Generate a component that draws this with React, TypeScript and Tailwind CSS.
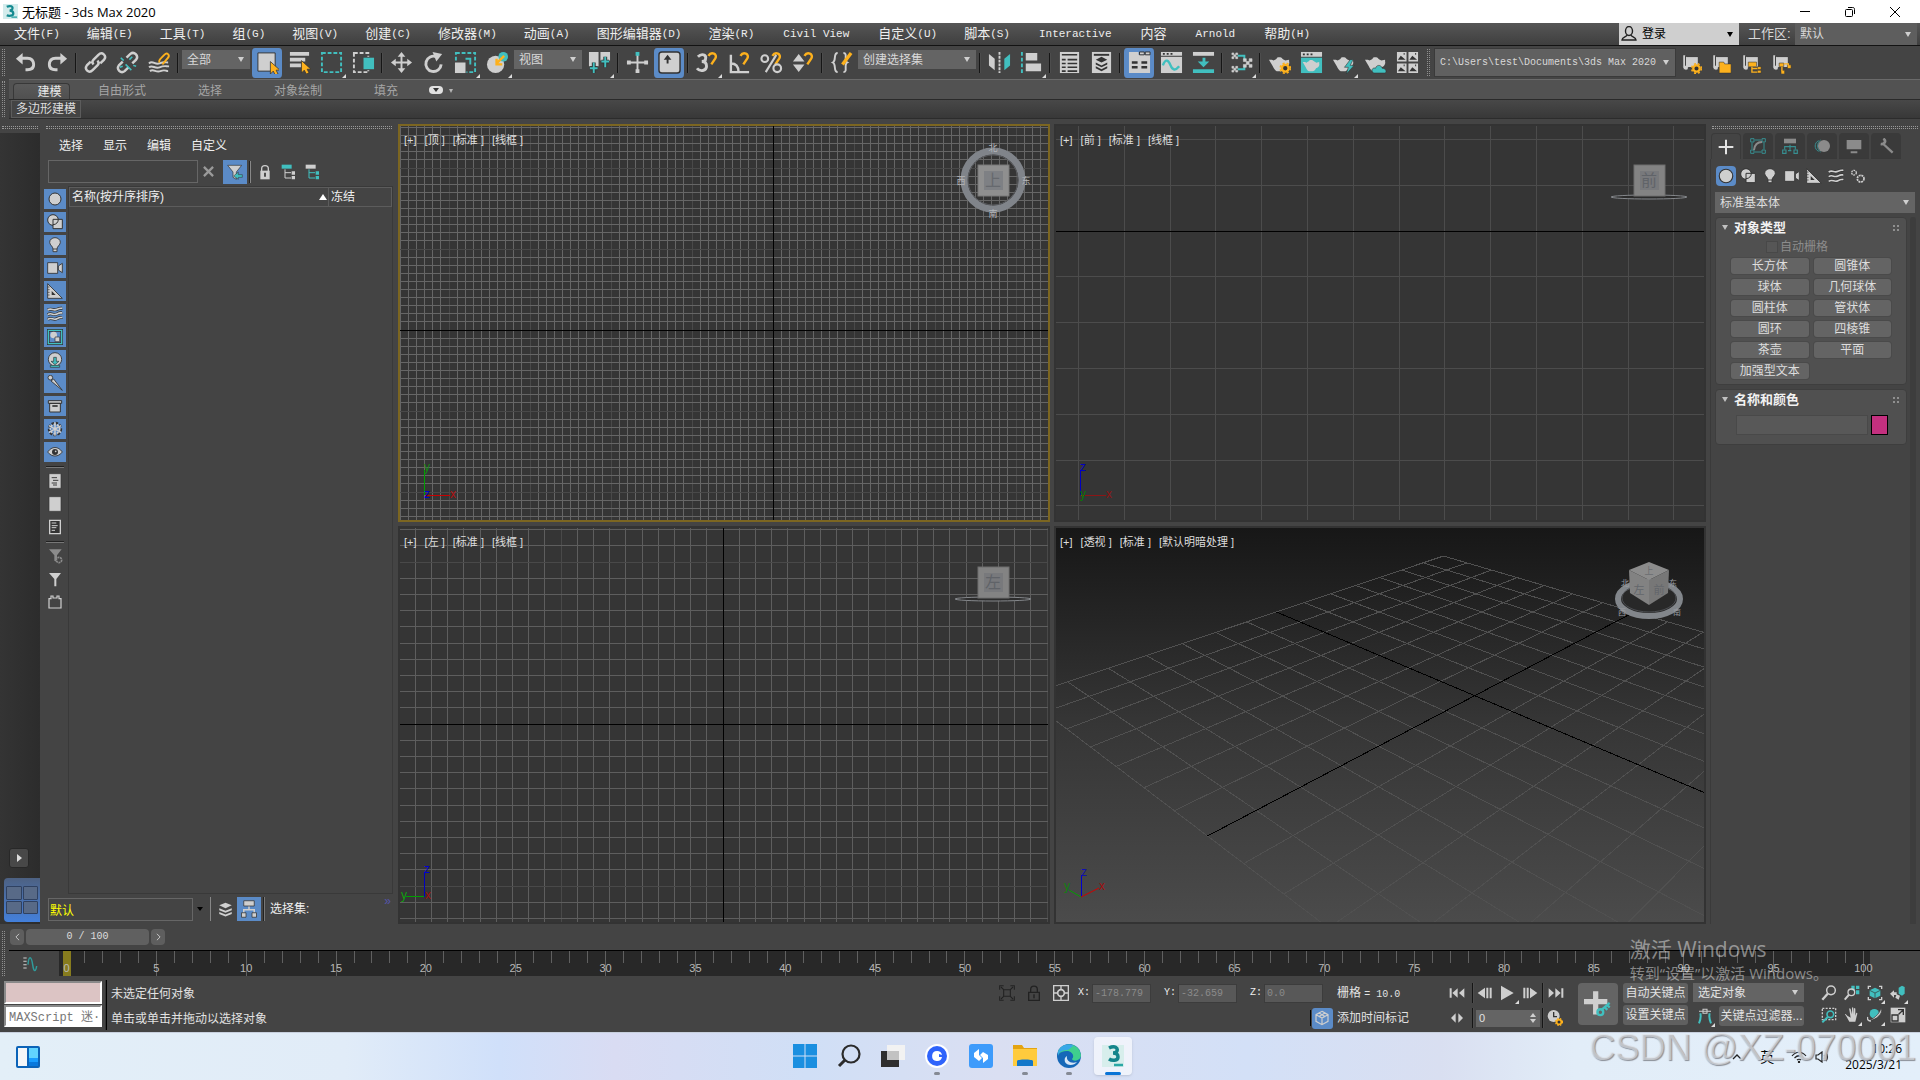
import React from 'react'

const W = '#cfcfcf'
const T = '#41bfbf'
const O = '#fdb11d'
const D = '#333333'

const teapot = (
    <path d="M6 10c1-1 2-1 3-2 0-2 5-2 6 0 1 1 2 1 3 2l4-1v2c1 3-2 6-4 6-1 2-3 4-4 4H9c-2-1-3-3-4-5L1 9h3z" fill={W} />
)
const gear = (
    <g>
        <circle cx="18" cy="18" r="3.5" fill={D} stroke={O} strokeWidth="2.5" />
        <circle cx="18" cy="18" r="5.3" fill="none" stroke={O} strokeWidth="1.6" strokeDasharray="2.2 2.1" />
    </g>
)
const scroll = <path d="M3 3h3l1 2h13v12H9v2c-3 2-6 0-6-3zM6 4v11" fill={W} stroke={D} strokeWidth="1" />
const hook = <path d="M13 5c3-5 10-2 7 3l-4 6" fill="none" stroke={O} strokeWidth="2.5" />

// all toolbar glyphs share a 24x24 box
const icons: Record<string, React.ReactNode> = {
    undo: <path d="M2 8l7-6v4h5c5 0 8 3 8 8s-3 7-8 7h-2v-3h2c3 0 5-2 5-4 0-3-2-5-5-5H9v5z" fill={W} />,
    redo: <path d="M22 8l-7-6v4h-5c-5 0-8 3-8 8s3 7 8 7h2v-3h-2c-3 0-5-2-5-4 0-3 2-5 5-5h5v5z" fill={W} />,
    link: <path d="M10 14c-2-2-1-4 0-5l5-5c4-4 9 1 6 5l-4 4M14 10c2 2 1 4 0 5l-5 5c-4 4-9-1-6-5l4-4" fill="none" stroke={W} strokeWidth="2.6" />,
    unlink: (
        <g fill="none" strokeWidth="2.6">
            <path d="M11 7l4-4c4-3 9 2 6 6l-4 4M13 17l-4 4c-4 3-9-2-6-6l4-4" stroke={W} />
            <path d="M10 14l6 6M8 10l-3-3M14 9l3-3M7 16l-3 1M18 15l3 1" stroke={T} strokeWidth="1.6" />
        </g>
    ),
    bind: (
        <g fill="none" strokeWidth="2">
            <path d="M1 13c4-4 6 2 11 0s6-1 9-1M1 17c4-3 6 2 11 0s6-1 10-1M2 21c4-3 6 2 11 0s5 0 8 0" stroke={W} />
            <path d="M12 12c-1-2 0-3 5-8 3-3 6 0 4 3l-6 7" stroke={O} />
        </g>
    ),
    select: (
        <g>
            <path d="M2 2h18v19H2z" fill={W} stroke={D} />
            <path d="M15 11v13l3-3 2 4 3-1-2-4h4z" fill={O} stroke={D} strokeWidth=".8" />
        </g>
    ),
    byname: (
        <g>
            <path d="M2 1h20v4H2zM2 7h16v4H2zM2 13h12v4H2z" fill={W} />
            <path d="M14 10v13l3-3 2 4 3-1-2-4h4z" fill={O} stroke={D} strokeWidth=".8" />
        </g>
    ),
    rect: <path d="M2 2h20v20H2z" fill="none" stroke={T} strokeWidth="2" strokeDasharray="4 2" />,
    window: (
        <g>
            <path d="M2 2h15v20H2z" fill="none" stroke={W} strokeWidth="2" strokeDasharray="4 2" />
            <path d="M11 6h13v14H11z" fill="#444444" />
            <path d="M12 7h11v12H12z" fill={T} />
        </g>
    ),
    move: <path d="M12 1l4 5h-3v5h5V8l5 4-5 4v-3h-5v5h3l-4 5-4-5h3v-5H6v3l-5-4 5-4v3h5V6H8z" fill={W} />,
    rotate: (
        <g>
            <path d="M15 6a8 8 0 1 0 5 8" fill="none" stroke={W} strokeWidth="3" />
            <path d="M11 1l10 2-6 8z" fill={W} />
        </g>
    ),
    scale: (
        <g>
            <path d="M2 2h20v20H2z" fill="none" stroke={T} strokeWidth="2" strokeDasharray="4 2" />
            <path d="M0 11h13v13H0z" fill="#444444" />
            <path d="M1 12h11v11H1z" fill={W} />
            <path d="M12 8h5v6" fill="none" stroke={T} strokeWidth="2" />
        </g>
    ),
    place: (
        <g>
            <circle cx="10" cy="14" r="9" fill={W} />
            <circle cx="18" cy="6" r="5" fill={T} />
            <path d="M19 5l-8 8m0-5v6h6" fill="none" stroke={O} strokeWidth="2.5" />
        </g>
    ),
    pivot: (
        <g>
            <path d="M1 1h10v15H1zM13 1h10v9H13z" fill={W} />
            <path d="M6 12v11M2 18h8M18 6v11M14 11h8" stroke={D} strokeWidth="4" />
            <path d="M6 12v11M2 18h8M18 6v11M14 11h8" stroke={T} strokeWidth="2" />
        </g>
    ),
    manip: (
        <g>
            <path d="M12 1v22M1 12h22" stroke={W} strokeWidth="2" />
            <path d="M10 1h4v4h-4z" fill={T} />
            <path d="M10 19h4v4h-4zM1 10h4v4H1zM19 10h4v4h-4z" fill={W} />
        </g>
    ),
    keyb: (
        <g>
            <rect x="1" y="1" width="22" height="22" rx="3" fill={W} stroke={D} strokeWidth="1.5" />
            <path d="M9 13V9H6l4-5 4 5h-3v4z" fill={D} />
        </g>
    ),
    snap3: (
        <g>
            {hook}
            <path d="M2 6c4-4 9-2 8 2 0 2-2 3-4 3 3 0 5 1 5 5 0 5-7 6-10 2" fill="none" stroke={W} strokeWidth="3" />
        </g>
    ),
    snapa: (
        <g>
            {hook}
            <path d="M3 4v18h19M3 13c5 0 8 3 8 9" fill="none" stroke={W} strokeWidth="2.5" />
        </g>
    ),
    snapp: (
        <g fill="none">
            {hook}
            <circle cx="5" cy="8" r="3.5" stroke={W} strokeWidth="2.2" />
            <circle cx="18" cy="18" r="4" stroke={W} strokeWidth="2.2" />
            <path d="M17 4L6 22" stroke={W} strokeWidth="2.2" />
        </g>
    ),
    snaps: (
        <g>
            {hook}
            <path d="M1 11l6-8 6 8zM1 14l6 8 6-8z" fill={W} />
        </g>
    ),
    sets: (
        <g fill="none">
            <path d="M8 2C3 2 7 10 3 12c4 2 0 10 5 10M14 2c5 0 0 8 4 10-4 2 1 10-4 10" stroke={W} strokeWidth="2" />
            <path d="M22 2l-9 12" stroke={O} strokeWidth="3.5" />
        </g>
    ),
    mirror: (
        <g>
            <path d="M1 3l6 5v12l-6-5z" fill={W} />
            <path d="M12 1v22" stroke={W} strokeWidth="2" strokeDasharray="3 1" />
            <path d="M23 3l-6 5v12l6-5z" fill={T} />
        </g>
    ),
    align: (
        <g>
            <path d="M2 1v22" stroke={T} strokeWidth="2" strokeDasharray="4 2" />
            <path d="M6 2h12v8H6zM6 13h16v8H6z" fill={W} />
        </g>
    ),
    layers: (
        <g>
            <path d="M2 1h20v22H2z" fill={W} />
            <path d="M4 4h16M4 9h4M10 9h10M4 13h4M10 13h10M4 17h4M10 17h10M4 21h4M10 21h10" stroke={D} strokeWidth="1.6" />
        </g>
    ),
    layers2: (
        <g>
            <path d="M2 1h20v22H2z" fill={W} />
            <path d="M4 4h16" stroke={D} strokeWidth="2" />
            <path d="M12 6l6 3-6 3-6-3zM6 12l6 3 6-3v2l-6 3-6-3zM6 16l6 3 6-3v2l-6 3-6-3z" fill={D} />
        </g>
    ),
    ribbon: (
        <g>
            <path d="M1 1h10v3h12v19H1z" fill={W} />
            <path d="M12 1h5v3h-5zM18 1h5v3h-5z" fill={W} stroke={D} />
            <path d="M4 12h6M14 12h6M4 17h6M14 17h6" stroke={D} strokeWidth="2.5" />
        </g>
    ),
    curve: (
        <g>
            <path d="M1 1h22v22H1z" fill={W} />
            <path d="M1 5.5h22" stroke={D} />
            <path d="M3 3h2M7 3h2M11 3h2" stroke={D} strokeWidth="2" />
            <path d="M3 15c3-8 6-5 8 0s5 6 9 1" fill="none" stroke={T} strokeWidth="2.5" />
        </g>
    ),
    schematic: (
        <g>
            <path d="M1 1h22v4H1z" fill={W} />
            <path d="M1 19h22v4H1zM11 7h3v4h4l-6 6-6-6h5z" fill={T} />
        </g>
    ),
    slate: (
        <g fill="none">
            <path d="M8 5h7v4M8 19h7v-4" stroke={T} strokeWidth="2" />
            <path d="M2 2h2v2H2zM6 2h2v2H6zM4 4h2v2H4zM2 6h2v2H2zM6 6h2v2H6zM2 16h2v2H2zM6 16h2v2H6zM4 18h2v2H4zM2 20h2v2H2zM6 20h2v2H6z" fill={W} stroke={W} strokeWidth=".6" />
            <path d="M14 8h3v3h-3zM20 8h3v3h-3zM17 11h3v3h-3zM14 14h3v3h-3zM20 14h3v3h-3z" fill={W} stroke={W} strokeWidth=".6" />
        </g>
    ),
    rsetup: <g>{teapot}{gear}</g>,
    rframe: (
        <g>
            <path d="M1 1h22v5H1z" fill={W} />
            <path d="M3 3.5h2M7 3.5h2M11 3.5h2" stroke={D} strokeWidth="2" />
            <path d="M1 7h22v16H1z" fill={T} />
            <g transform="translate(2 4) scale(.82)">{teapot}</g>
        </g>
    ),
    render: <g>{teapot}<path d="M19 9l-6 8h4l-2 7 8-9h-4l3-6z" fill={T} stroke={D} strokeWidth=".6" /></g>,
    rcloud: <g>{teapot}<path d="M9 22c-2-3 1-5 3-4 1-4 6-4 7 0 4 0 5 4 3 5H10z" fill={T} stroke={D} strokeWidth=".6" /></g>,
    gallery: (
        <g>
            <path d="M1 1h10v10H1zM13 1h10v10H13zM1 13h10v10H1zM13 13h10v10H13z" fill={W} />
            <path d="M2 9l3-4 5 4zM14 9l3-4 5 4zM2 21l3-4 5 4zM14 21l3-4 5 4z" fill={D} />
            <path d="M8 3h1M20 3h1M8 15h1M20 15h1" stroke={D} strokeWidth="2" />
        </g>
    ),
    sgear: <g>{scroll}{gear}</g>,
    sfolder: <g>{scroll}<path d="M10 11h5l1 2h7v10H10z" fill={O} stroke={D} strokeWidth=".6" /></g>,
    stree: <g>{scroll}<path d="M9 11h9v5H9zM19 16h4v3h-4zM19 20h4v3h-4z" fill={O} stroke={D} strokeWidth=".6" /><path d="M13 16v6h6M13 18h6" fill="none" stroke={O} strokeWidth="1.5" /></g>,
    sgraph: <g>{scroll}<path d="M10 12h5v4h-5zM19 14h4v4h-4zM12 20h4v4h-4z" fill={O} stroke={D} strokeWidth=".6" /><path d="M15 13h5v2M13 16v5" fill="none" stroke={O} strokeWidth="1.5" /></g>,
    sphere: <circle cx="12" cy="12" r="9" fill={W} stroke={D} strokeWidth="1.5" />,
    shapes: (
        <g stroke={D} strokeWidth="1.5">
            <circle cx="9" cy="9" r="8" fill={W} />
            <path d="M9 8h14v14H9z" fill={W} />
            <path d="M9 16c5 0 8-4 8-8" fill="none" />
        </g>
    ),
    bulb: <path d="M9 18c0-4-5-6-5-10a8 7 0 0 1 16 0c0 4-5 6-5 10v4H9zM9 18h6" fill={W} stroke={D} strokeWidth="1.3" />,
    camera: <path d="M1 4h15v16H1zM17 9l6-4v14l-6-4z" fill={W} stroke={D} strokeWidth="1.3" />,
    ruler: (
        <g>
            <path d="M1 1l22 22H1z" fill={W} stroke={D} strokeWidth="1.3" />
            <path d="M7 12v6h6z" fill={D} />
            <path d="M1 6h3M1 10h3M1 14h3M1 18h3" stroke={D} />
        </g>
    ),
    waves: (
        <g fill="none">
            <path d="M1 6c6-4 8 2 14-1s5-1 8-2M1 13c6-4 8 2 14-1s5-1 8-2M1 20c6-4 8 2 14-1s5-1 8-2" stroke={D} strokeWidth="4.5" />
            <path d="M1 6c6-4 8 2 14-1s5-1 8-2M1 13c6-4 8 2 14-1s5-1 8-2M1 20c6-4 8 2 14-1s5-1 8-2" stroke={W} strokeWidth="2.4" />
        </g>
    ),
    group: (
        <g>
            <path d="M2 2h20v20H2z" fill="none" stroke={D} strokeWidth="4" />
            <path d="M2 2h20v20H2z" fill="none" stroke={T} strokeWidth="2" />
            <circle cx="10" cy="9" r="5" fill={W} />
            <path d="M12 12h7v7h-7z" fill={W} stroke={D} />
        </g>
    ),
    xref: (
        <g>
            <circle cx="12" cy="11" r="10" fill={W} stroke={D} strokeWidth="1.3" />
            <path d="M10 8h4v6h4l-6 5-6-5h4zM5 20h14v3H5z" fill={T} stroke={D} />
        </g>
    ),
    bone: (
        <g fill={W} stroke={D} strokeWidth="1.3">
            <path d="M6 9l4-3 13 17z" />
            <circle cx="5" cy="4" r="3.5" />
        </g>
    ),
    box: (
        <g fill={W} stroke={D} strokeWidth="1.5">
            <path d="M2 4h20v4H2zM4 8h16v13H4z" />
            <path d="M8 12h8" strokeWidth="2.5" />
        </g>
    ),
    snow: (
        <g fill="none" stroke={W}>
            <circle cx="12" cy="12" r="9" stroke={D} strokeWidth="3.5" strokeDasharray="4 2" />
            <path d="M12 2v20M3 7l18 10M3 17L21 7" strokeWidth="2.2" />
            <circle cx="12" cy="12" r="7" strokeWidth="2.5" strokeDasharray="3 2" />
        </g>
    ),
    eye: (
        <g>
            <path d="M1 12c6-9 16-9 22 0-6 8-16 8-22 0z" fill={W} stroke={D} strokeWidth="1.3" />
            <circle cx="12" cy="12" r="4.5" fill={D} />
            <circle cx="13" cy="11" r="1.3" fill={W} />
        </g>
    ),
    doc: (
        <g>
            <path d="M3 1h18v22H3z" fill={W} stroke={D} />
            <path d="M7 7h8M9 11h8M7 15h8M9 18h6" stroke={D} strokeWidth="1.4" />
        </g>
    ),
    page: <path d="M3 1h18v22H3z" fill={W} stroke={D} />,
    docline: (
        <g>
            <path d="M4 2h16v20H4z" fill={D} stroke={W} strokeWidth="2" />
            <path d="M7 6h7M7 10h9M7 13h7M7 17h5" stroke={W} strokeWidth="1.5" />
        </g>
    ),
    funnelgear: (
        <g>
            <path d="M3 2h19l-7 9v10l-4-2v-8z" fill="#8c8c8c" />
            <circle cx="18" cy="18" r="4" fill="#444" stroke="#8c8c8c" strokeWidth="2.5" strokeDasharray="3 1" />
        </g>
    ),
    funnel: <path d="M3 3h18l-7 9v11h-3V12z" fill={W} />,
    puzzle: <path d="M3 7h3V3h3v3h6V3h3v4h3v14H3z" fill="none" stroke={W} strokeWidth="1.8" />,
    filter: (
        <g>
            <path d="M1 2h21l-8 10v11l-5-3v-8z" fill={W} stroke={D} />
            <path d="M23 16h-6v-4l-7 6 7 5v-3h6z" fill={T} stroke={D} strokeWidth=".8" />
        </g>
    ),
    lock: (
        <g>
            <path d="M7 11V7c0-6 10-6 10 0v4" fill="none" stroke={W} strokeWidth="2" />
            <path d="M5 10h14v13H5z" fill={W} />
            <path d="M12 13v6" stroke={D} strokeWidth="2.5" />
        </g>
    ),
    treea: (
        <g>
            <path d="M1 1h15v6H1z" fill={T} />
            <path d="M6 8v13h9M6 13h9" fill="none" stroke={W} strokeWidth="1.5" />
            <path d="M16 11h5v5h-5zM16 18h5v5h-5z" fill={W} />
        </g>
    ),
    treeb: (
        <g>
            <path d="M1 1h15v6H1z" fill={W} />
            <path d="M6 8v13h9M6 13h9" fill="none" stroke={T} strokeWidth="1.5" />
            <path d="M16 11h5v5h-5zM16 18h5v5h-5z" fill={T} />
        </g>
    ),
    stack: <path d="M12 1l10 4-10 5L2 5zM2 10l10 4 10-4v3l-10 4-10-4zM2 16l10 4 10-4v3l-10 4-10-4z" fill={W} />,
    hier: (
        <g>
            <path d="M12 7v7M5 17v-4h14v4" fill="none" stroke={W} strokeWidth="2" />
            <path d="M5 1h14v7H5zM2 17h6v6H2zM16 17h6v6h-6z" fill={W} stroke={D} />
        </g>
    ),
    plus: <path d="M12 1v22M1 12h22" stroke="#e4e4e4" strokeWidth="3" />,
    modify: (
        <g fill="none" stroke="#378e90" strokeWidth="1.5">
            <path d="M1 1h5v5H1zM18 1h5v5h-5zM1 18h5v5H1zM18 18h5v5h-5zM7 3h10M7 21h10M3 7v10M21 7v10" />
            <path d="M6 18c1-8 5-12 12-12" stroke="#8b8b8b" strokeWidth="3" />
        </g>
    ),
    hierarchy: (
        <g fill="none" stroke="#378e90" strokeWidth="1.7">
            <path d="M3 1h18v7H3z" fill="#8b8b8b" stroke="none" />
            <path d="M12 10v9M4 17v-4h16v4M1 18h5v5H1zM18 18h5v5h-5zM9 19h5" />
        </g>
    ),
    motion: (
        <g fill="none" stroke="#378e90" strokeWidth="1.5">
            <path d="M7 4c-7 3-7 13 0 16M10 3c-6 4-6 14 0 18" />
            <circle cx="15" cy="12" r="9" fill="#8b8b8b" stroke="none" />
        </g>
    ),
    display: <path d="M1 3h22v14H1zM7 20h10v3H7z" fill="#8b8b8b" />,
    wrench: (
        <g fill="none" stroke="#8b8b8b">
            <path d="M8 9l14 13" strokeWidth="3.5" />
            <path d="M8 1c5 3 2 9-4 8" strokeWidth="4" />
        </g>
    ),
    gears: (
        <g fill="none" stroke={W} strokeWidth="2">
            <circle cx="6" cy="7" r="3.5" strokeDasharray="2.5 1" />
            <circle cx="16" cy="16" r="5" strokeWidth="2.5" strokeDasharray="3 1" />
        </g>
    ),
    isolate: (
        <g fill="none" stroke="#222" strokeWidth="1.6">
            <path d="M7 7h10v10H7zM1 7V1h6M17 1h6v6M23 17v6h-6M7 23H1v-6M3 3l4 4M21 3l-4 4M3 21l4-4M21 21l-4-4" />
        </g>
    ),
    darklock: (
        <g fill="none" stroke="#222" strokeWidth="2">
            <path d="M7 11V7c0-7 10-7 10 0v4M4 11h16v12H4zM12 14v6" />
        </g>
    ),
    abs: (
        <g fill="none" stroke={W} strokeWidth="2">
            <path d="M1 1h22v22H1zM12 2v20M2 12h20" />
            <circle cx="12" cy="12" r="5" fill="#444" strokeWidth="2.5" />
        </g>
    ),
    cubeline: <path d="M12 2l9 5v10l-9 5-9-5V7zM3 7l9 5 9-5M12 12v10M7 4l10 6M17 4L7 10" fill="none" stroke={W} strokeWidth="1.8" />,
    first: <path d="M1 5h3v14H1zM13 5v14l-8-7zM23 5v14l-8-7z" fill={W} />,
    last: <path d="M20 5h3v14h-3zM11 5v14l8-7zM1 5v14l8-7z" fill={W} />,
    prev: <path d="M1 12l11-8v16zM14 4h3v16h-3zM19 4h3v16h-3z" fill={W} />,
    next: <path d="M23 12L12 4v16zM7 4h3v16H7zM2 4h3v16H2z" fill={W} />,
    play: <path d="M3 1l19 11L3 23z" fill={W} />,
    keymode: <path d="M3 12l7-7v14zM21 12l-7-7v14z" fill={W} />,
    timecfg: (
        <g>
            <circle cx="10" cy="9" r="9" fill={W} />
            <path d="M10 3v7h5" fill="none" stroke={D} strokeWidth="2" />
            {gear}
        </g>
    ),
    setkey: (
        <g>
            <path d="M10 1v20M0 10h20" stroke={W} strokeWidth="4.5" />
            <circle cx="14" cy="19" r="2.5" fill="none" stroke={T} strokeWidth="2" />
            <path d="M15 17l7-6M20 13l2 2M18 15l2 2" stroke={T} strokeWidth="2" />
        </g>
    ),
    tangent: (
        <g fill="none">
            <path d="M3 23c3-7 3-11 2-15M21 23c-3-7-3-11-2-15" stroke={T} strokeWidth="3" />
            <path d="M3 5h18M9 2h6v6H9z" stroke={W} strokeWidth="1.6" />
        </g>
    ),
    zoom: (
        <g fill="none" stroke={W}>
            <circle cx="15" cy="8" r="6.5" strokeWidth="2.2" />
            <path d="M10 13l-8 9" strokeWidth="3.5" />
        </g>
    ),
    zoomall: (
        <g fill="none" stroke={W}>
            <path d="M11 1h5v7h-5zM18 1h5v5h-5zM18 8h5v6h-5z" fill={T} stroke="none" />
            <circle cx="11" cy="11" r="5" strokeWidth="2" />
            <path d="M7 15l-6 7" strokeWidth="3" />
        </g>
    ),
    extents: (
        <g>
            <path d="M2 6V2h4M18 2h4v4M22 18v4h-4M6 22H2v-4" fill="none" stroke={W} strokeWidth="2" />
            <path d="M12 4l8 4v8l-8 4-8-4V8z" fill={T} />
            <path d="M4 8l8 4 8-4M12 12v8" fill="none" stroke={D} />
        </g>
    ),
    extall: (
        <g>
            <path d="M13 4l5-3 4 2v10l-4 3-5-3z" fill={T} />
            <path d="M0 13l6-5v3h4v4H6v4zM10 14l5 2-2 6-5-3z" fill={W} />
        </g>
    ),
    region: (
        <g fill="none">
            <path d="M2 2h20v17H2z" stroke={W} strokeWidth="2" strokeDasharray="3 2" />
            <circle cx="14" cy="11" r="5" stroke={T} strokeWidth="2.4" />
            <path d="M10 15l-8 8" stroke={T} strokeWidth="3" />
        </g>
    ),
    hand: <path d="M5 13c-3-4-5-3-2 0l5 9h9l3-12c0-2-2-2-2 0l-1 3V3c0-2-2-2-2 0v8l-1-9c0-2-2-2-2 0v9l-2-8c-1-2-3-1-2 1l2 12z" fill={W} />,
    orbit: (
        <g fill="none">
            <circle cx="11" cy="10" r="7" fill={T} />
            <path d="M3 20C8 19 19 11 21 2c5 6-8 19-18 18z" fill={W} stroke={D} />
            <path d="M1 15c-1 4 1 6 5 6" stroke={W} strokeWidth="2" />
        </g>
    ),
    maximize: (
        <g>
            <path d="M1 1h22v22H1z" fill={W} />
            <path d="M3 12h9v9H3zM12 4h8v8M20 4l-7 7" fill="none" stroke={D} strokeWidth="2" />
        </g>
    ),
    minicurve: (
        <g fill="none">
            <path d="M2 3h5M2 8h5M2 13h5M2 18h5" stroke={W} strokeWidth="1.6" />
            <path d="M9 13c1-14 5-14 7 0s5 9 6 2" stroke="#2f9b9b" strokeWidth="2.2" />
        </g>
    ),
}

const Ico = ({ name, className = 'size-6' }: { name: string; className?: string }) => (
    <svg viewBox="0 0 24 24" className={`shrink-0 ${className}`} aria-hidden="true">
        {icons[name]}
    </svg>
)

const Fly = () => <span className="absolute right-px bottom-0 border-2 border-transparent border-r-[#dcdcdc] border-b-[#dcdcdc]" />

const Tool = ({ name, on, fly }: { name: string; on?: boolean; fly?: boolean }) => (
    <button
        aria-label={name}
        className={`relative flex h-[30px] w-8 shrink-0 items-center justify-center ${on ? 'rounded bg-[#5b8bc7] bg-clip-content px-px' : ''}`}
    >
        <Ico name={name} className="size-[23px]" />
        {fly && <Fly />}
    </button>
)

const Sep = () => <div className="mx-[2px] h-5 w-[2px] shrink-0 border-l border-[#161616] bg-[#4d4d4d]" />

const VGrip = ({ className = '' }: { className?: string }) => (
    <div className={`w-[3px] shrink-0 border-x border-dotted border-[#8f8f8f] ${className}`} />
)

const HGrip = () => <div className="h-[3px] border-y border-dotted border-[#9a9a9a]" />

const Select = ({ label, options, className, arrow = 'border-t-[#cfcfcf]', mono }: {
    label: string; options: string[]; className: string; arrow?: string; mono?: boolean
}) => (
    <div className={`relative flex shrink-0 items-center ${className}`}>
        <select
            aria-label={label}
            className={`h-full w-full appearance-none bg-transparent pl-[5px] outline-none ${mono ? "font-['Liberation_Mono',monospace] text-[10px]" : 'text-xs'}`}
        >
            {options.map((o) => <option key={o}>{o}</option>)}
        </select>
        <span className={`pointer-events-none absolute right-[6px] border-x-[3px] border-t-[5px] border-x-transparent ${arrow}`} />
    </div>
)

const menus = [
    ['文件', '(F)'], ['编辑', '(E)'], ['工具', '(T)'], ['组', '(G)'], ['视图', '(V)'], ['创建', '(C)'],
    ['修改器', '(M)'], ['动画', '(A)'], ['图形编辑器', '(D)'], ['渲染', '(R)'], ['', 'Civil View'],
    ['自定义', '(U)'], ['脚本', '(S)'], ['', 'Interactive'], ['内容', ''], ['', 'Arnold'], ['帮助', '(H)'],
]

const TitleBar = () => (
    <header className="flex h-[23px] items-center bg-white pl-[3px] font-['Open_Sans','Noto_Sans_CJK_SC',sans-serif] text-black">
        <svg viewBox="0 0 16 16" className="size-[15px]">
            <path d="M0 0h16v16H0z" fill="#d3ecec" />
            <path d="M4 3c4-2 7 0 6 2 0 1-2 2-3 2 3 0 4 1 4 3 0 3-5 3-7 2" fill="none" stroke="#158a90" strokeWidth="2.4" />
            <path d="M9 14h6" stroke="#35a5a5" strokeWidth="1.5" />
        </svg>
        <h1 className="ml-1 flex-1 text-[13px] leading-5">无标题 - 3ds Max 2020</h1>
        <button aria-label="minimize" className="flex h-full w-[45px] items-center justify-center"><span className="h-px w-[10px] bg-black" /></button>
        <button aria-label="restore" className="flex h-full w-[45px] items-center justify-center">
            <svg viewBox="0 0 10 10" className="size-[10px]" fill="none" stroke="#000"><rect x=".5" y="2.5" width="7" height="7" rx="1" /><path d="M3 .5h4.500c1.500 0 2 .5 2 2V7" /></svg>
        </button>
        <button aria-label="close" className="mr-[3px] flex h-full w-[45px] items-center justify-center">
            <svg viewBox="0 0 10 10" className="size-[10px]" stroke="#000"><path d="M0 0l10 10M10 0L0 10" /></svg>
        </button>
    </header>
)

const MenuBar = () => (
    <nav className="flex h-[23px] items-center border-b border-[#131313] bg-gradient-to-b from-[#565656] to-[#3f3f3f] pl-[14px]">
        <div className="flex flex-1 items-center gap-[27px]">
            {menus.map(([zh, en]) => (
                <button key={zh + en} className={`flex items-center text-[13px] leading-5 whitespace-nowrap text-[#eeeeee] ${zh ? '' : 'px-[2px]'}`}>
                    {zh}
                    <span className="font-['Liberation_Mono',monospace] text-[11px]">{en}</span>
                </button>
            ))}
        </div>
        <div className="flex h-full w-[120px] items-center bg-[#cfcfcf] text-black">
            <svg viewBox="0 0 16 16" className="ml-[2px] size-4" fill="none" stroke="#222" strokeWidth="1.4"><ellipse cx="8" cy="5" rx="3.500" ry="4.500" /><path d="M6 9c0 2-5 2-5 5h14c0-3-5-3-5-5" /></svg>
            <Select label="登录" options={['登录']} className="h-full flex-1" arrow="border-t-black" />
        </div>
        <span className="w-14 pl-[9px] text-[13px] text-[#d8d8d8]">工作区:</span>
        <Select label="工作区" options={['默认']} className="mr-[3px] h-full w-[122px] bg-[#5e5e5e] text-[#d8d8d8]" />
    </nav>
)

const MainToolbar = () => (
    <div className="flex h-[33px] items-center bg-[#444444] pl-[2px] text-[#d8d8d8]">
        <VGrip className="mr-1 h-[27px]" />
        <Tool name="undo" /><Tool name="redo" /><Sep />
        <Tool name="link" /><Tool name="unlink" /><Tool name="bind" /><Sep />
        <Select label="选择过滤器" options={['全部']} className="mx-px mb-[6px] h-[19px] w-[68px] bg-[#646464]" />
        <Tool name="select" on /><Tool name="byname" /><Tool name="rect" fly /><Tool name="window" /><Sep />
        <Tool name="move" /><Tool name="rotate" /><Tool name="scale" fly /><Tool name="place" fly />
        <Select label="参考坐标系" options={['视图']} className="mx-px mb-[6px] h-[19px] w-[68px] bg-[#646464]" />
        <Tool name="pivot" fly /><Sep />
        <Tool name="manip" /><Tool name="keyb" on /><Sep />
        <Tool name="snap3" fly /><Tool name="snapa" /><Tool name="snapp" /><Tool name="snaps" /><Sep />
        <Tool name="sets" />
        <Select label="命名选择集" options={['创建选择集']} className="mx-px mb-[6px] h-[19px] w-[118px] bg-[#646464]" />
        <Sep />
        <Tool name="mirror" /><Tool name="align" fly /><Sep />
        <Tool name="layers" /><Tool name="layers2" /><Sep />
        <Tool name="ribbon" on /><Tool name="curve" /><Tool name="schematic" /><Sep />
        <Tool name="slate" fly /><Sep />
        <Tool name="rsetup" /><Tool name="rframe" /><Tool name="render" fly /><Tool name="rcloud" /><Tool name="gallery" />
        <VGrip className="mx-1 h-[27px]" />
        <Select
            label="项目文件夹"
            options={['C:\\Users\\test\\Documents\\3ds Max 2020']}
            mono
            className="h-[29px] w-[242px] border border-[#3a3a3a] bg-[#606060]"
        />
        <div className="flex">
            {['sgear', 'sfolder', 'stree', 'sgraph'].map((n) => (
                <button key={n} aria-label={n} className="flex w-[30px] justify-center"><Ico name={n} className="size-[22px]" /></button>
            ))}
        </div>
    </div>
)

const Ribbon = () => (
    <div className="flex h-10 bg-[#444444] pl-[2px]">
        <VGrip className="my-[2px] mr-1" />
        <div className="flex flex-1 flex-col">
            <div className="flex h-[21px] items-end border-t border-b border-t-[#6a6a6a] border-b-[#2a2a2a] bg-[#525252] pl-1 text-xs leading-4 text-[#a5a5a5]">
                <button className="h-4 w-[57px] rounded-t-sm border border-b-0 border-[#383838] bg-gradient-to-b from-[#5a5a5a] to-[#505050] pl-4 leading-[14px] text-[#e8e8e8]">建模</button>
                <div className="ml-7 flex items-center gap-[52px]">
                    <button>自由形式</button>
                    <button>选择</button>
                    <button>对象绘制</button>
                    <button>填充</button>
                </div>
                <button aria-label="ribbon mode" className="mb-[5px] ml-[31px] flex h-2 w-[14px] items-center justify-center rounded-sm bg-[#e0e0e0]">
                    <span className="border-x-[3px] border-t-4 border-x-transparent border-t-[#333]" />
                </button>
                <span className="mb-[6px] ml-[6px] border-x-2 border-t-4 border-x-transparent border-t-[#b5b5b5]" />
            </div>
            <div className="flex h-[19px] items-start border-b border-[#2c2c2c] bg-gradient-to-b from-[#484848] to-[#383838] pl-[2px]">
                <button className="flex h-[18px] w-[70px] items-center justify-center border border-[#5c5c5c] bg-[#444444] text-xs leading-4 text-[#dcdcdc]">多边形建模</button>
            </div>
        </div>
    </div>
)

const filters = ['sphere', 'shapes', 'bulb', 'camera', 'ruler', 'waves', 'group', 'xref', 'bone', 'box', 'snow', 'eye']

const SceneExplorer = () => (
    <section className="flex w-[354px] shrink-0 flex-col bg-[#444444] pt-[7px] pl-1 text-xs text-[#efefef]">
        <div className="mx-[2px]"><HGrip /></div>
        <div className="flex h-[29px] items-center gap-5 pt-1 pl-[15px] leading-4">
            <button>选择</button><button>显示</button><button>编辑</button><button>自定义</button>
        </div>
        <div className="flex h-7 items-center pb-px pl-1">
            <input aria-label="搜索" className="h-[23px] w-[150px] border border-[#666666] bg-[#424242] px-1 outline-none" />
            <button aria-label="clear" className="flex w-[25px] justify-center pr-1">
                <svg viewBox="0 0 12 12" className="size-[11px]" stroke="#9a9a9a" strokeWidth="2.5"><path d="M1 1l10 10M11 1L1 11" /></svg>
            </button>
            <button aria-label="filter" className="flex size-6 items-center justify-center bg-[#5b8bc7]"><Ico name="filter" className="size-4" /></button>
            <span className="mx-[2px] h-[22px] w-[2px] border-l border-[#222] bg-[#888]" />
            {['lock', 'treea', 'treeb'].map((n) => (
                <button key={n} aria-label={n} className="flex w-6 justify-center"><Ico name={n} className="size-4" /></button>
            ))}
        </div>
        <div className="flex flex-1">
            <div className="flex w-6 flex-col pt-[3px]">
                <div className="flex flex-col gap-[3px]">
                    {filters.map((n) => (
                        <button key={n} aria-label={n} className="flex h-5 w-[22px] items-center justify-center bg-[#5b8bc7]"><Ico name={n} className="size-4" /></button>
                    ))}
                </div>
                <div className="mt-1 mb-[3px] ml-[2px] h-[2px] w-[18px] border-t border-[#222] bg-[#777]" />
                <div className="flex flex-col gap-[3px]">
                    {['doc', 'page', 'docline'].map((n) => (
                        <button key={n} aria-label={n} className="flex h-5 w-[22px] items-center justify-center"><Ico name={n} className="size-4" /></button>
                    ))}
                </div>
                <div className="mt-1 mb-[3px] ml-[2px] h-[2px] w-[18px] border-t border-[#222] bg-[#777]" />
                <div className="flex flex-col gap-[3px]">
                    {['funnelgear', 'funnel', 'puzzle'].map((n) => (
                        <button key={n} aria-label={n} className="flex h-5 w-[22px] items-center justify-center"><Ico name={n} className="size-4" /></button>
                    ))}
                </div>
            </div>
            <div className="mr-px flex-1 border border-[#393939]">
                <table className="w-full table-fixed border-collapse text-left leading-[18px]">
                    <thead>
                        <tr>
                            <th className="border border-[#5c5c5c] pl-[2px] font-normal">
                                <div className="flex items-center justify-between pr-px">
                                    名称(按升序排序)
                                    <span className="border-x-4 border-b-[6px] border-x-transparent border-b-white" />
                                </div>
                            </th>
                            <th className="w-[63px] border border-[#5c5c5c] pl-[2px] font-normal">冻结</th>
                        </tr>
                    </thead>
                </table>
            </div>
        </div>
        <div className="flex h-[30px] items-center pl-1">
            <input aria-label="图层" defaultValue="默认" className="h-[23px] w-[145px] border border-[#666666] bg-transparent pl-px text-[#ffff00] outline-none" />
            <span className="mx-1 border-x-[3px] border-t-4 border-x-transparent border-t-black" />
            <span className="mr-[2px] ml-[3px] h-6 w-px bg-[#888]" />
            <button aria-label="layers" className="flex w-6 justify-center"><Ico name="stack" className="size-[15px]" /></button>
            <button aria-label="hierarchy" className="flex size-6 items-center justify-center bg-[#5b8bc7]"><Ico name="hier" className="size-[18px]" /></button>
            <span className="mx-[2px] h-6 w-[2px] border-l border-[#222] bg-[#777]" />
            <span className="ml-[3px] flex-1">选择集:</span>
            <span className="self-start pt-px pr-[3px] leading-3 text-[#5555aa]">»</span>
        </div>
    </section>
)

const VW = 648
const VH = 394

const GridLines = ({ step, ox, oy, major, minor, axisX }: {
    step: number; ox: number; oy: number; major: string; minor: string; axisX?: boolean
}) => {
    const lines: React.ReactNode[] = []
    const add = (pos: number, i: number, vert: boolean) => {
        const p = Math.floor(pos) + 0.5
        const stroke = i % 10 === 0 ? major : minor
        lines.push(
            vert
                ? <path key={`v${i}`} d={`M${p} 0V${VH}`} stroke={stroke} />
                : <path key={`h${i}`} d={`M0 ${p}H${VW}`} stroke={stroke} />
        )
    }
    for (let i = Math.ceil(-ox / step); ox + i * step < VW; i++) add(ox + i * step, i, true)
    for (let i = Math.ceil(-oy / step); oy + i * step < VH; i++) add(oy + i * step, i, false)
    return (
        <g shapeRendering="crispEdges">
            {lines}
            <path d={`M0 ${Math.floor(oy) + 0.5}H${VW}`} stroke="#000" />
            {axisX && <path d={`M${Math.floor(ox) + 0.5} 0V${VH}`} stroke="#000" />}
        </g>
    )
}

// ground plane corners run from -1 to 1 on both axes
const project = (u: number, v: number) => {
    const w = 1 - 0.2429 * u + 0.2525 * v
    return `${((144.8 * u + 305.5 * v + 418.7) / w).toFixed(1)} ${((63.3 * u - 62.5 * v + 167.7) / w).toFixed(1)}`
}

const Ground = () => {
    const range = Array.from({ length: 15 }, (_, i) => (i - 7) / 7)
    return (
        <g shapeRendering="crispEdges" fill="none">
            {range.filter((r) => r !== 0).map((r) => (
                <path key={r} d={`M${project(r, -1)}L${project(r, 1)}M${project(-1, r)}L${project(1, r)}`} stroke="#505050" />
            ))}
            <path d={`M${project(0, -1)}L${project(0, 1)}M${project(-1, 0)}L${project(1, 0)}`} stroke="#000" />
        </g>
    )
}

const axisText = "font-['Liberation_Sans',sans-serif] text-[12px]"

const FlatCube = ({ face }: { face: string }) => (
    <g>
        <ellipse cx="593" cy="71" rx="38" ry="2" fill="#2c2c2c" stroke="#85888c" />
        <rect x="578" y="39" width="31" height="31" fill="#838383" stroke="#6e6e6e" />
        <rect x="584" y="45" width="19" height="19" fill="#78797c" />
        <text x="593" y="60" textAnchor="middle" fill="#606368" className="text-[16px]">{face}</text>
    </g>
)

const Viewport = ({ labels, active, persp, children }: {
    labels: string[]; active?: boolean; persp?: boolean; children: React.ReactNode
}) => (
    <div className={`relative overflow-hidden border-2 ${active ? 'border-[#7c6621]' : 'border-[#333333]'} ${persp ? 'bg-gradient-to-b from-[#171717] via-[#363636] to-[#4b4b4b]' : 'bg-[#353535]'}`}>
        <svg viewBox={`0 0 ${VW} ${VH}`} preserveAspectRatio="xMinYMin slice" className="absolute inset-0 h-full w-full">
            {children}
        </svg>
        <div className="relative flex gap-2 pt-[6px] pl-1 text-[11px] leading-4 text-[#dddddd]">
            {labels.map((l) => <button key={l}>[{l}]</button>)}
        </div>
    </div>
)

const Viewports = () => (
    <main className="grid min-w-0 flex-1 grid-cols-2 grid-rows-2 gap-1 px-1 pt-[5px]">
        <Viewport labels={['+', '顶 ', '标准 ', '线框 ']} active>
            <GridLines step={8.1} ox={373} oy={204} major="#494949" minor="#666666" axisX />
            <circle cx="593" cy="54" r="29" fill="none" stroke="#80848a" strokeWidth="7" />
            <circle cx="593" cy="54" r="25" fill="none" stroke="#5a5c60" />
            <rect x="578" y="39" width="31" height="31" fill="#8f8f8f" stroke="#787878" />
            <rect x="584" y="45" width="19" height="19" fill="#7e8084" />
            <text x="593" y="60" textAnchor="middle" fill="#66696e" className="text-[16px]">上</text>
            <g fill="#b3b5b8" textAnchor="middle" className="text-[9px]">
                <text x="593" y="25">北</text><text x="593" y="91">南</text><text x="561" y="58">西</text><text x="626" y="58">东</text>
            </g>
            <g className={axisText}>
                <path d="M24.500 344V369" stroke="#00a000" /><path d="M25 369.500H50" stroke="#c80000" />
                <text x="24" y="345" fill="#168716">y</text><text x="50" y="372" fill="#b01010">x</text><text x="24" y="372" fill="#0000d0">z</text>
            </g>
        </Viewport>
        <Viewport labels={['+', '前 ', '标准 ', '线框 ']}>
            <GridLines step={45.8} ox={-115} oy={105} major="#4c4c4c" minor="#4c4c4c" />
            <FlatCube face="前" />
            <g className={axisText}>
                <path d="M24.500 344V369" stroke="#0000c0" /><path d="M25 369.500H50" stroke="#8c1515" />
                <text x="24" y="345" fill="#0000c0">z</text><text x="50" y="372" fill="#8c1515">x</text><text x="24" y="372" fill="#087808">y</text>
            </g>
        </Viewport>
        <Viewport labels={['+', '左 ', '标准 ', '线框 ']}>
            <GridLines step={16.2} ox={323} oy={196} major="#494949" minor="#5e5e5e" axisX />
            <FlatCube face="左" />
            <g className={axisText}>
                <path d="M24.500 344V369" stroke="#0000c0" /><path d="M6 368.500H24" stroke="#00a000" />
                <text x="24" y="345" fill="#0000d0">z</text><text x="25" y="371" fill="#a01010">x</text><text x="1" y="371" fill="#10a010">y</text>
            </g>
        </Viewport>
        <Viewport labels={['+', '透视 ', '标准 ', '默认明暗处理 ']} persp>
            <Ground />
            <ellipse cx="593" cy="71" rx="31" ry="17" fill="#282828" stroke="#82868b" strokeWidth="6" />
            <ellipse cx="593" cy="70" rx="27" ry="14" fill="none" stroke="#4c4e52" />
            <path d="M593 34l20 8-20 10-20-10z" fill="#8c8c8c" />
            <path d="M573 42l20 10v25l-19-12z" fill="#828282" />
            <path d="M613 42l-20 10v25l19-12z" fill="#777777" />
            <g fill="#63666b" textAnchor="middle" className="text-[11px]">
                <text x="583" y="66">左</text><text x="603" y="66">前</text>
            </g>
            <text x="593" y="46" textAnchor="middle" fill="#6a6c70" className="text-[9px]">上</text>
            <g fill="#9a9da1" textAnchor="middle" className="text-[8px]">
                <text x="566" y="87">西</text><text x="621" y="87">南</text><text x="569" y="58">北</text><text x="617" y="58">东</text>
            </g>
            <g className={axisText}>
                <path d="M25.500 347V369" stroke="#0000d0" /><path d="M25 369L43 360" stroke="#d00000" /><path d="M25 369L13 362" stroke="#00a000" />
                <text x="25" y="348" fill="#1010b0">z</text><text x="43" y="362" fill="#a01010">x</text><text x="8" y="362" fill="#108010">y</text>
            </g>
        </Viewport>
    </main>
)

const primitives = ['长方体', '圆锥体', '球体', '几何球体', '圆柱体', '管状体', '圆环', '四棱锥', '茶壶', '平面', '加强型文本']

const Rollout = ({ title, children }: { title: string; children: React.ReactNode }) => (
    <div className="w-48 rounded-sm border border-[#3e3e3e] bg-[#505050] px-[15px] pb-[5px]">
        <div className="flex h-[19px] items-center">
            <span className="-ml-[9px] border-x-[3px] border-t-[5px] border-x-transparent border-t-[#c0c0c0]" />
            <h2 className="ml-[6px] flex-1 text-[13px] leading-[19px] font-bold text-[#f2f2f2]">{title}</h2>
            <span className="-mr-2 h-[6px] w-[6px] border-y-2 border-dotted border-[#909090]" />
        </div>
        {children}
    </div>
)

const CommandPanel = () => (
    <aside className="flex w-[210px] shrink-0 flex-col bg-[#444444] pt-[7px] text-xs text-[#dddddd]">
        <div className="mx-[2px]"><HGrip /></div>
        <div className="flex gap-[2px] pt-1 pl-px">
            {['plus', 'modify', 'hierarchy', 'motion', 'display', 'wrench'].map((n, i) => (
                <button key={n} aria-label={n} className={`flex h-[26px] w-[30px] items-center justify-center rounded-t ${i === 0 ? 'border border-b-0 border-[#3a3a3a] bg-[#444444]' : 'border-b border-[#393939] bg-[#3a3a3a]'}`}>
                    <Ico name={n} className="size-4" />
                </button>
            ))}
        </div>
        <div className="flex flex-1 flex-col border-l border-[#3a3a3a] pl-1">
            <div className="flex h-[33px] items-center gap-[2px] pl-px">
                {['sphere', 'shapes', 'bulb', 'camera', 'ruler', 'waves', 'gears'].map((n, i) => (
                    <button key={n} aria-label={n} className={`flex size-5 items-center justify-center rounded-sm ${i === 0 ? 'bg-[#5b8bc7]' : ''}`}>
                        <Ico name={n} className={i === 0 ? 'size-[18px]' : 'size-4'} />
                    </button>
                ))}
            </div>
            <Select label="类别" options={['标准基本体']} className="mb-1 h-[21px] w-[200px] bg-[#646464]" />
            <div className="flex flex-1 justify-between pr-1">
                <div className="flex flex-col gap-1">
                    <Rollout title="对象类型">
                        <label className="mb-px flex h-5 items-center justify-center gap-[2px] pr-7 text-[#8c8c8c]">
                            <input type="checkbox" disabled className="size-3 appearance-none border border-[#484848] bg-[#565656]" />
                            自动栅格
                        </label>
                        <div className="grid grid-cols-2 gap-[5px]">
                            {primitives.map((p) => (
                                <button key={p} className="h-4 rounded-[3px] bg-[#646464] leading-4 whitespace-nowrap shadow-[0_0_0_1px_#4a4a4a]">{p}</button>
                            ))}
                        </div>
                    </Rollout>
                    <Rollout title="名称和颜色">
                        <div className="flex items-center gap-[3px] pt-[6px] pb-1 pl-[5px]">
                            <input aria-label="名称" className="h-5 w-[132px] border border-[#494949] bg-[#585858]" />
                            <button aria-label="color" className="h-5 w-[17px] border border-black bg-[#c4307f]" />
                        </div>
                    </Rollout>
                </div>
                <div className="w-[6px] rounded-t bg-[#3d3d3d]" />
            </div>
        </div>
    </aside>
)

const frames = Array.from({ length: 101 }, (_, i) => i)

const Timeline = () => (
    <div className="relative flex bg-[#444444] pl-[2px]">
        <VGrip className="mt-[7px] mr-1" />
        <div className="flex-1">
            <div className="flex h-[26px] items-center gap-[2px] pb-[1px] pl-px text-[11px] text-[#dddddd]">
                <button aria-label="previous frame" className="flex h-4 w-[14px] items-center justify-center rounded-sm bg-[#5e5e5e]">
                    <svg viewBox="0 0 6 10" className="h-2 w-[5px]" fill="none" stroke="#ddd"><path d="M5 1L1 5l4 4" /></svg>
                </button>
                <button className="h-4 w-[123px] rounded-sm bg-[#606060] font-['Liberation_Mono',monospace] text-[10px] leading-4">0 / 100</button>
                <button aria-label="next frame" className="flex h-4 w-[14px] items-center justify-center rounded-sm bg-[#5e5e5e]">
                    <svg viewBox="0 0 6 10" className="h-2 w-[5px]" fill="none" stroke="#ddd"><path d="M1 1l4 4-4 4" /></svg>
                </button>
            </div>
            <div className="flex h-[26px] border-t border-black">
                <button aria-label="mini curve editor" className="flex w-[50px] items-center justify-center pr-2"><Ico name="minicurve" className="size-4" /></button>
                <div className="flex flex-1 justify-between bg-[#282828] pr-[6px] pl-[7px] text-[11px] text-[#b8b8b8]">
                    {frames.map((f) => (
                        <div key={f} className={`relative flex w-px justify-center bg-[#606060] ${f % 5 === 0 ? 'h-full' : 'h-3'}`}>
                            {f === 0 && <span className="absolute inset-y-0 w-2 bg-[#877c1e]" />}
                            {f % 5 === 0 && <span className="absolute top-[10px] leading-[14px]">{f}</span>}
                        </div>
                    ))}
                </div>
                <div className="w-[50px]" />
            </div>
        </div>
    </div>
)

const Coord = ({ axis, value }: { axis: string; value: string }) => (
    <label className="flex items-center font-['Liberation_Mono',monospace] text-[10px] text-[#eeeeee]">
        <span className="w-[14px]">{axis}:</span>
        <input defaultValue={value} className="h-[19px] w-[59px] border border-[#3c3c3c] bg-[#585858] pl-[2px] text-[#8b8b8b]" />
    </label>
)

const Small = ({ name, className = 'w-[23px]', fly }: { name: string; className?: string; fly?: boolean }) => (
    <button aria-label={name} className={`relative flex h-[22px] shrink-0 items-center justify-center ${className}`}>
        <Ico name={name} className="size-4" />
        {fly && <Fly />}
    </button>
)

const StatusBar = () => (
    <div className="flex h-14 bg-[#444444] pt-[3px] text-xs text-[#e2e2e2]">
        <div className="flex w-[98px] flex-col gap-px pt-[2px] ml-1">
            <input aria-label="macro recorder" className="h-[23px] w-full border-2 border-t-[#8a8a8a] border-l-[#8a8a8a] border-r-white border-b-white bg-[#dcc4c4]" />
            <input aria-label="listener" defaultValue="MAXScript 迷·" className="h-[22px] w-full border-2 border-t-[#8a8a8a] border-l-[#8a8a8a] border-r-white border-b-white bg-white pl-[3px] font-['Liberation_Mono','Noto_Sans_CJK_SC',monospace] text-xs text-[#777777]" />
        </div>
        <div className="mt-px mr-1 ml-[3px] h-[50px] w-[2px] border-r border-black bg-[#333]" />
        <div className="flex flex-1 flex-col gap-px pt-[3px] leading-6">
            <p>未选定任何对象</p>
            <p>单击或单击并拖动以选择对象</p>
        </div>
        <div className="flex w-[413px] flex-col items-end">
            <div className="flex h-7 w-full items-center">
                <Small name="isolate" className="w-[22px]" /><Small name="darklock" className="w-8" /><Small name="abs" className="w-[22px]" />
                <div className="ml-[6px] flex gap-[13px]">
                    <Coord axis="X" value="-178.779" /><Coord axis="Y" value="-32.659" /><Coord axis="Z" value="0.0" />
                </div>
                <span className="ml-[14px] whitespace-nowrap">栅格 <span className="font-['Liberation_Mono',monospace] text-[10px]">= 10.0</span></span>
            </div>
            <div className="flex h-[22px] items-center">
                <span className="mr-px h-4 w-px bg-black" />
                <button aria-label="tag" className="flex size-[21px] items-center justify-center rounded-[3px] bg-[#5b8bc7]"><Ico name="cubeline" className="size-4" /></button>
                <button className="pl-1">添加时间标记</button>
            </div>
        </div>
        <div className="ml-[34px] flex flex-col">
            <div className="flex h-7 items-center">
                <Small name="first" className="w-[27px]" /><Sep /><Small name="prev" className="w-[18px]" /><Small name="play" className="w-[26px]" fly /><Small name="next" className="w-5" /><Sep /><Small name="last" className="w-5" />
            </div>
            <div className="flex items-center">
                <Small name="keymode" className="w-[27px]" /><Sep />
                <div className="flex w-16 items-center bg-[#646464] pr-1">
                    <input type="text" aria-label="当前帧" defaultValue="0" className="h-[17px] min-w-0 flex-1 pl-[3px] text-[11px]" />
                    <span className="flex flex-col gap-[2px]">
                        <span className="border-x-[3px] border-b-4 border-x-transparent border-b-[#cfcfcf]" />
                        <span className="border-x-[3px] border-t-4 border-x-transparent border-t-[#cfcfcf]" />
                    </span>
                </div>
                <Sep /><Small name="timecfg" className="w-[18px]" />
            </div>
        </div>
        <button aria-label="set key" className="mt-1 ml-3 flex h-[42px] w-10 items-center justify-center rounded bg-[#646464]"><Ico name="setkey" className="size-7" /></button>
        <div className="mt-1 ml-[5px] flex flex-col gap-[2px]">
            <button className="h-5 w-[65px] rounded-[3px] bg-[#606060] leading-5">自动关键点</button>
            <button className="h-5 w-[65px] rounded-[3px] bg-[#606060] leading-5">设置关键点</button>
        </div>
        <div className="mt-1 ml-[5px] flex w-[111px] flex-col gap-[3px]">
            <Select label="关键点集" options={['选定对象']} className="h-[19px] w-full bg-[#646464]" />
            <div className="flex items-center justify-between">
                <Small name="tangent" fly />
                <button className="h-5 w-[85px] overflow-hidden rounded-[3px] bg-[#606060] leading-5 whitespace-nowrap">关键点过滤器...</button>
            </div>
        </div>
        <div className="mr-[11px] ml-[13px] grid grid-cols-4 content-start pt-[3px]">
            <Small name="zoom" /><Small name="zoomall" /><Small name="extents" fly /><Small name="extall" fly />
            <Small name="region" /><Small name="hand" fly /><Small name="orbit" fly /><Small name="maximize" />
        </div>
    </div>
)

const TaskIcon = ({ label, dot, on, children }: { label: string; dot?: boolean; on?: boolean; children: React.ReactNode }) => (
    <button aria-label={label} className="relative flex h-12 w-11 items-center justify-center">
        {on && <span className="absolute size-[38px] rounded bg-white/60 shadow-sm" />}
        <svg viewBox="0 0 24 24" className="relative size-6">{children}</svg>
        {dot && <span className="absolute bottom-[5px] h-[3px] w-[6px] rounded-full bg-[#858a94]" />}
        {on && <span className="absolute bottom-[5px] h-[3px] w-4 rounded-full bg-[#0a74d6]" />}
    </button>
)

const Taskbar = () => (
    <footer className="relative flex h-12 items-center border-t border-[#c8d0de] bg-[linear-gradient(90deg,#e3eff8_0%,#e1ecf8_18%,#d0e0fa_26%,#d9dcf3_32%,#d0dff6_42%,#dadff2_52%,#d3e0f7_65%,#d9dff1_75%,#e2edf8_82%,#e3effa_100%)] text-xs text-black">
        <button aria-label="widgets" className="flex flex-1 pl-4">
            <svg viewBox="0 0 24 24" className="size-6">
                <rect y="1" width="24" height="22" rx="2" fill="#0b63b8" /><path d="M2 3h9v18H2z" fill="#f4f6f8" /><path d="M13 3h9v10h-9z" fill="#61d4ff" /><path d="M13 13h9v4h-9z" fill="#189dff" /><path d="M13 17h9v4h-9z" fill="#0878dc" />
            </svg>
        </button>
        <div className="flex pb-px">
            <TaskIcon label="start"><path d="M0 0h11.500v11.500H0zM12.500 0H24v11.500H12.500zM0 12.500h11.500V24H0zM12.500 12.500H24V24H12.500z" fill="#1a8fe0" /></TaskIcon>
            <TaskIcon label="search"><circle cx="14" cy="10" r="8.500" fill="none" stroke="#2b2b2b" strokeWidth="2.200" /><path d="M8 16l-6 6" stroke="#2b2b2b" strokeWidth="3" /></TaskIcon>
            <TaskIcon label="task view"><path d="M0 7h18v16H0z" fill="#2e2e2e" /><path d="M6 1h18v15H6z" fill="#f2f2f2" /><path d="M6 7h12v9H6z" fill="#c2c2c2" /></TaskIcon>
            <TaskIcon label="browser" dot><circle cx="12" cy="12" r="12" fill="#fff" /><circle cx="12" cy="12" r="10" fill="#2e63fb" /><path d="M12 7a5 5 0 1 0 5 6h-3v-3l3 1a5 5 0 0 0-5-4z" fill="#fff" /></TaskIcon>
            <TaskIcon label="assistant"><rect width="24" height="24" rx="3" fill="#3d9bfb" /><path d="M5 9l5-4v6l3 3-3 3-5-4zM19 15l-5 4v-5l-3-3 3-3 5 3z" fill="#fff" /></TaskIcon>
            <TaskIcon label="files" dot><path d="M0 1h9l2 3h13v18H0z" fill="#e4a411" /><path d="M0 5h24v17H0z" fill="#ffcb3d" /><path d="M4 22v-5c0-2 16-2 16 0v5z" fill="#1478c9" /></TaskIcon>
            <TaskIcon label="edge" dot><circle cx="12" cy="12" r="12" fill="#1668b8" /><path d="M1 8C4-2 22-3 24 11c0 6-8 7-9 4 3-3 0-8-5-8-4 0-7 1-9 4z" fill="#3fcf8e" /><path d="M1 8C4 0 12-1 17 2c-3 0-4 4-7 4-5 0-8 2-9 6z" fill="#38a8e8" /><path d="M10 12c-1 5 4 8 10 6-3 4-10 4-12 0-1-3 0-5 2-6z" fill="#d6e6f6" /></TaskIcon>
            <TaskIcon label="3ds Max" on><path d="M1 1h22v22H1z" fill="#d7eeec" /><path d="M8 4c6-3 9 0 8 3-1 2-3 2-4 2 4 0 5 2 5 4 0 4-6 4-9 2" fill="none" stroke="#14848b" strokeWidth="3.500" /><path d="M13 21h9" stroke="#2aa7a5" strokeWidth="2.500" /></TaskIcon>
        </div>
        <div className="flex flex-1 items-center justify-end pr-[18px] font-['Open_Sans','Noto_Sans_CJK_SC',sans-serif]">
            <svg viewBox="0 0 10 6" className="mr-[18px] w-[10px]" fill="none" stroke="#222" strokeWidth="1.300"><path d="M1 5l4-4 4 4" /></svg>
            <span className="text-sm">英</span>
            <svg viewBox="0 0 16 12" className="ml-[17px] w-4" fill="none" stroke="#222" strokeWidth="1.200"><path d="M1 5c4-5 10-5 14 0M3.500 7c3-3 6-3 9 0M6 9c1-1 3-1 4 0" /><circle cx="8" cy="11" r=".6" /></svg>
            <svg viewBox="0 0 14 12" className="ml-2 w-[14px]" fill="none" stroke="#222" strokeWidth="1.200"><path d="M1 4h2l4-3v10L3 8H1zM9 4c1 1 1 3 0 4M11 2c2 2 2 6 0 8" /></svg>
            <time className="ml-4 text-right leading-4">10:26<br />2025/3/21</time>
        </div>
        <p className="pointer-events-none absolute right-1 bottom-3 font-['Liberation_Sans',sans-serif] text-[36px] leading-10 whitespace-nowrap text-[#e4e6ea]/60 [text-shadow:1px_1px_1px_#8a8e96]">CSDN @XZ-070001</p>
    </footer>
)

const App = () => (
    <div className="relative flex min-h-screen flex-col overflow-hidden bg-[#444444] font-['Liberation_Sans','Noto_Sans_CJK_SC',sans-serif]">
        <TitleBar />
        <MenuBar />
        <MainToolbar />
        <Ribbon />
        <div className="flex flex-1">
            <div className="flex w-10 shrink-0 flex-col pt-[7px]">
                <div className="mx-[2px]"><HGrip /></div>
                <div className="mt-1 flex flex-1 flex-col items-end justify-end bg-gradient-to-r from-[#343434] to-[#2c2c2c] pb-[2px]">
                    <button aria-label="expand" className="mr-[11px] mb-[10px] flex size-5 items-center justify-center rounded-[3px] border border-[#282828] bg-[#484848]">
                        <span className="border-y-4 border-l-[5px] border-y-transparent border-l-[#dddddd]" />
                    </button>
                    <button aria-label="viewport layout" className="grid h-11 w-9 grid-cols-2 gap-px rounded-l bg-gradient-to-b from-[#4d6182] to-[#4380dc] px-[2px] py-2">
                        {[0, 1, 2, 3].map((i) => <span key={i} className="rounded-[1px] border border-[#2f4161] bg-[#586a87]" />)}
                    </button>
                </div>
            </div>
            <SceneExplorer />
            <Viewports />
            <CommandPanel />
        </div>
        <Timeline />
        <StatusBar />
        <div className="pointer-events-none absolute right-[92px] bottom-[97px] font-['Open_Sans','Noto_Sans_CJK_SC',sans-serif] text-white/45">
            <p className="text-[21px] leading-7">激活 Windows</p>
            <p className="text-[15px] leading-5 whitespace-nowrap">转到“设置”以激活 Windows。</p>
        </div>
        <Taskbar />
    </div>
)

export default App
